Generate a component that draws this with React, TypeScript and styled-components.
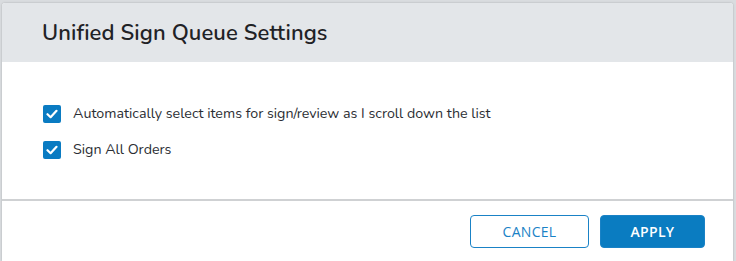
import React from "react";
import styled, { createGlobalStyle } from "styled-components";

const Global = createGlobalStyle`
  html, body { margin: 0; padding: 0; }
  body {
    width: 736px;
    height: 261px;
    overflow: hidden;
    background: #d9dcdf;
    font-family: "Nunito", "Lato", "Open Sans", sans-serif;
  }
`;

const Page = styled.div`
  display: flex;
  flex-direction: column;
  width: 736px;
  height: 261px;
  padding: 3px 3px 0 2px;
  box-sizing: border-box;
`;

const Dialog = styled.div`
  flex: 1;
  display: flex;
  flex-direction: column;
  background: #ffffff;
  border-radius: 3px 3px 0 0;
  box-shadow: 0 0 2px rgba(0, 0, 0, 0.25);
  overflow: hidden;
`;

const Header = styled.div`
  height: 59px;
  display: flex;
  align-items: center;
  padding-left: 40px;
  background: #e3e6e9;
`;

const Title = styled.h2`
  margin: 0;
  font-size: 22px;
  font-weight: 600;
  color: #1f2226;
  letter-spacing: 0.1px;
`;

const Body = styled.div`
  display: flex;
  flex-direction: column;
  gap: 17px;
  padding: 42px 0 0 41px;
  height: 139px;
  box-sizing: border-box;
  border-bottom: 2px solid #cfd1d3;
`;

const Row = styled.label`
  display: flex;
  align-items: center;
  gap: 12px;
  font-size: 14.25px;
  color: #2b2e33;
`;

const Box = styled.span`
  width: 18px;
  height: 18px;
  border-radius: 2px;
  background: #0a7bc2;
  display: flex;
  align-items: center;
  justify-content: center;
`;

const Footer = styled.div`
  display: flex;
  justify-content: flex-end;
  gap: 11px;
  padding: 14px 28px 0 0;
`;

const Button = styled.button<{ $primary?: boolean }>`
  box-sizing: border-box;
  height: 33px;
  width: ${(p) => (p.$primary ? "105px" : "119px")};
  border-radius: 4px;
  border: 1px solid #1a82c6;
  background: ${(p) => (p.$primary ? "#0a7cc1" : "#ffffff")};
  color: ${(p) => (p.$primary ? "#ffffff" : "#1a82c6")};
  font-family: "Open Sans", "Lato", sans-serif;
  font-size: 14px;
  font-weight: ${(p) => (p.$primary ? 600 : 400)};
  letter-spacing: 0.3px;
  cursor: pointer;
`;

const Check = () => (
  <svg width="12" height="10" viewBox="0 0 12 10">
    <path d="M1.5 5.2 L4.6 8.2 L10.5 1.8" fill="none" stroke="#fff" strokeWidth="2.2" strokeLinecap="round" strokeLinejoin="round" />
  </svg>
);

export default function App() {
  return (
    <>
      <Global />
      <Page>
        <Dialog>
          <Header>
            <Title>Unified Sign Queue Settings</Title>
          </Header>
          <Body>
            <Row>
              <Box><Check /></Box>
              Automatically select items for sign/review as I scroll down the list
            </Row>
            <Row>
              <Box><Check /></Box>
              Sign All Orders
            </Row>
          </Body>
          <Footer>
            <Button>CANCEL</Button>
            <Button $primary>APPLY</Button>
          </Footer>
        </Dialog>
      </Page>
    </>
  );
}
